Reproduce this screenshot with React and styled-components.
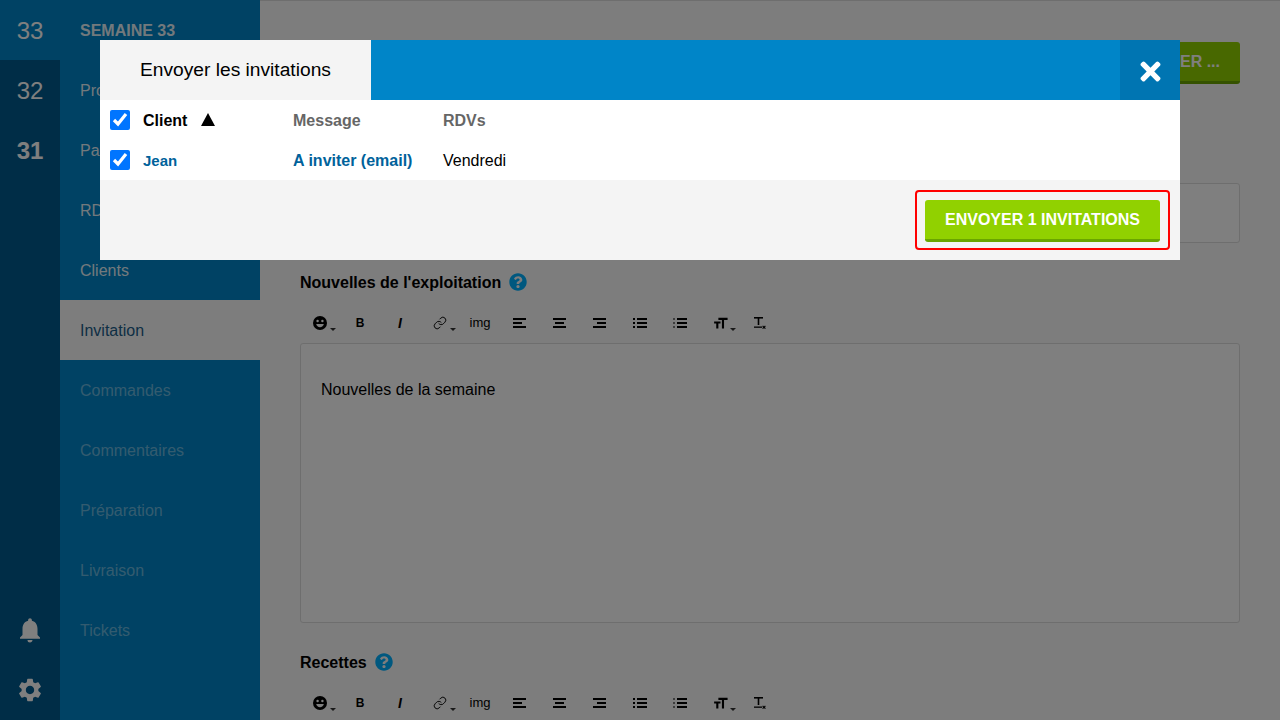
import React from 'react';
import styled, { createGlobalStyle } from 'styled-components';
import { MdNotifications, MdSettings, MdFormatSize } from 'react-icons/md';
import { FaQuestionCircle, FaTimes } from 'react-icons/fa';
import { Link } from 'lucide-react';

const GlobalStyle = createGlobalStyle`
    html, body {
        margin: 0;
        padding: 0;
        height: 100%;
        overflow: hidden;
    }
    body {
        font-family: "Liberation Sans", Arial, sans-serif;
        font-size: 16px;
        color: #000;
    }
`

const Page = styled.div`
    display: flex;
    width: 1280px;
    height: 720px;
    overflow: hidden;
    background-color: #fbfbfb;
`

const Rail = styled.div`
    display: flex;
    flex-direction: column;
    flex: 0 0 60px;
    background-color: #005a8e;
`

const RailItem = styled.div`
    display: flex;
    align-items: center;
    justify-content: center;
    box-sizing: border-box;
    height: 60px;
    padding-top: 1px;
    font-size: 24px;
    font-weight: ${p => (p.$strong ? 700 : 400)};
    color: #fff;
    background-color: ${p => (p.$current ? '#0085c8' : 'transparent')};
`

const RailIcon = styled(RailItem)`
    padding-top: 0;
    font-size: ${p => p.$size}px;
`

const RailSpacer = styled.div`
    flex: 1;
`

const Nav = styled.nav`
    display: flex;
    flex-direction: column;
    flex: 0 0 200px;
    background-color: #0085c8;
`

const NavItem = styled.div`
    display: flex;
    align-items: center;
    box-sizing: border-box;
    height: 60px;
    padding: 1px 0 0 20px;
    font-size: 16px;
    font-weight: ${p => (p.$title ? 700 : 400)};
    color: ${p => (p.$active ? '#1c5e8a' : p.$muted ? 'rgba(255,255,255,.42)' : 'rgba(255,255,255,.92)')};
    background-color: ${p => (p.$active ? '#fbfbfb' : 'transparent')};
`

const Main = styled.main`
    flex: 1;
    box-sizing: border-box;
    padding: 41px 40px 0;
    border-top: 1px solid #ddd;
    overflow: hidden;
`

const TopRow = styled.div`
    display: flex;
    justify-content: flex-end;
`

const SaveButton = styled.div`
    display: flex;
    align-items: center;
    box-sizing: border-box;
    height: 42px;
    padding: 0 20px;
    border-radius: 3px;
    border-bottom: 3px solid #6aa500;
    background-color: #91d100;
    color: #fff;
    font-weight: 700;
`

const InfoBox = styled.div`
    box-sizing: border-box;
    height: 60px;
    margin-top: 99px;
    border: 1px solid #ddd;
    border-radius: 3px;
    background-color: #fff;
`

const Section = styled.section`
    margin-top: ${p => p.$top}px;
`

const Heading = styled.h3`
    display: flex;
    align-items: center;
    gap: 8px;
    height: 20px;
    margin: 0;
    font-size: 16px;
    font-weight: 700;
    color: #000;
`

const HelpIcon = styled(FaQuestionCircle)`
    width: 18px;
    height: 18px;
    margin-bottom: 2px;
    color: #00b0ff;
`

const Toolbar = styled.div`
    display: flex;
    height: 40px;
    margin-top: 10px;
`

const Tool = styled.div`
    position: relative;
    display: flex;
    align-items: center;
    justify-content: center;
    width: 40px;
    height: 40px;
    font-size: 13px;
    color: #000;
`

const ToolText = styled.span`
    font-size: ${p => p.$size || 13}px;
    font-weight: ${p => (p.$bold ? 700 : 400)};
    font-style: ${p => (p.$italic ? 'italic' : 'normal')};
    margin-bottom: ${p => (p.$raised ? 2 : 0)}px;
`

const Caret = styled.span`
    position: absolute;
    left: 30px;
    top: 25px;
    width: 0;
    height: 0;
    border-left: 3px solid transparent;
    border-right: 3px solid transparent;
    border-top: 3px solid #333;
`

const Editor = styled.div`
    box-sizing: border-box;
    height: 280px;
    padding: 36px 20px;
    border: 1px solid #ddd;
    border-radius: 3px;
    background-color: #fff;
    line-height: 20px;
`

const Overlay = styled.div`
    position: fixed;
    inset: 0;
    background-color: rgba(0, 0, 0, .5);
`

const Modal = styled.div`
    position: fixed;
    top: 40px;
    left: 100px;
    width: 1080px;
    background-color: #fff;
`

const ModalHeader = styled.div`
    display: flex;
    height: 60px;
    background-color: #0085c8;
`

const ModalTitle = styled.div`
    display: flex;
    align-items: center;
    width: 271px;
    box-sizing: border-box;
    padding-left: 40px;
    font-size: 19.2px;
    background-color: #f4f4f4;
`

const CloseButton = styled.div`
    display: flex;
    align-items: center;
    justify-content: center;
    width: 60px;
    margin-left: auto;
    padding-top: 2px;
    box-sizing: border-box;
    background-color: #0075b2;
    color: #fff;
    font-size: 29px;
`

const Row = styled.div`
    display: grid;
    grid-template-columns: 33px 150px 150px 1fr;
    align-items: center;
    height: 40px;
    padding-left: 10px;
`

const Check = styled.input.attrs({ type: 'checkbox' })`
    width: 20px;
    height: 20px;
    margin: 0;
`

const Cell = styled.div`
    display: flex;
    align-items: center;
    padding-top: ${p => (p.$size ? 0 : 1)}px;
    font-size: ${p => p.$size || 16}px;
    font-weight: ${p => (p.$bold ? 700 : 400)};
    color: ${p => p.$color || '#000'};
`

const SortArrow = styled.span`
    width: 0;
    height: 0;
    margin-left: 14px;
    margin-bottom: 2px;
    border-left: 7px solid transparent;
    border-right: 7px solid transparent;
    border-bottom: 13px solid #000;
`

const ModalFooter = styled.div`
    display: flex;
    justify-content: flex-end;
    height: 80px;
    box-sizing: border-box;
    padding: 10px;
    background-color: #f4f4f4;
`

const Highlight = styled.div`
    box-sizing: border-box;
    height: 60px;
    padding: 8px;
    border: 2px solid #f00;
    border-radius: 4px;
`

const SendButton = styled(SaveButton)`
    width: 235px;
    justify-content: center;
    padding: 0;
`

function AlignIcon({ lines }) {
    return (
        <svg width="14" height="12" viewBox="0 0 14 12" fill="#000">
            {lines.map(([x, w], i) => <rect key={i} x={x} y={1 + i * 4} width={w} height="2" />)}
        </svg>
    )
}

function ListIcon({ faint }) {
    return (
        <svg width="14" height="12" viewBox="0 0 14 12" fill="#000">
            {[1, 5, 9].map(y => (
                <g key={y}>
                    <rect x="0" y={y} width="2" height="2" opacity={faint ? 0.5 : 1} />
                    <rect x="4" y={y} width="10" height="2" />
                </g>
            ))}
        </svg>
    )
}

function SmileIcon() {
    return (
        <svg width="14" height="14" viewBox="0 0 14 14">
            <circle cx="7" cy="7" r="7" fill="#000" />
            <circle cx="4.600" cy="5" r="1.200" fill="#fff" />
            <circle cx="9.400" cy="5" r="1.200" fill="#fff" />
            <path d="M3.200 8h7.600c-.3 2-1.900 3.200-3.800 3.200S3.500 10 3.200 8z" fill="#fff" />
        </svg>
    )
}

function ClearIcon() {
    return (
        <svg width="14" height="14" viewBox="0 0 14 14" fill="#000">
            <rect x="1" y="1" width="9" height="1.600" />
            <rect x="4.700" y="1" width="1.600" height="8" />
            <rect x="1" y="10.500" width="8" height="1.300" />
            <path d="M10 9.500l1 1 1-1 .8.8-1 1 1 1-.8.8-1-1-1 1-.8-.8 1-1-1-1z" />
        </svg>
    )
}

function EditorToolbar() {
    return (
        <Toolbar>
            <Tool><SmileIcon /><Caret /></Tool>
            <Tool><ToolText $bold $size={12}>B</ToolText></Tool>
            <Tool><ToolText $bold $italic $size={14}>I</ToolText></Tool>
            <Tool><Link size={14} strokeWidth={1.6} color="#000" /><Caret /></Tool>
            <Tool><ToolText $raised>img</ToolText></Tool>
            <Tool><AlignIcon lines={[[0, 13], [0, 9], [0, 13]]} /></Tool>
            <Tool><AlignIcon lines={[[0, 13], [2, 9], [0, 13]]} /></Tool>
            <Tool><AlignIcon lines={[[0, 13], [4, 9], [0, 13]]} /></Tool>
            <Tool><ListIcon /></Tool>
            <Tool><ListIcon faint /></Tool>
            <Tool><MdFormatSize size={17} /><Caret /></Tool>
            <Tool><ClearIcon /></Tool>
        </Toolbar>
    )
}

export default function App() {
    return (
        <Page>
            <GlobalStyle />
            <Rail>
                <RailItem $current>33</RailItem>
                <RailItem>32</RailItem>
                <RailItem $strong>31</RailItem>
                <RailSpacer />
                <RailIcon $size={30}><MdNotifications /></RailIcon>
                <RailIcon $size={28}><MdSettings /></RailIcon>
            </Rail>
            <Nav>
                <NavItem $title>SEMAINE 33</NavItem>
                <NavItem>Produits</NavItem>
                <NavItem>Paniers</NavItem>
                <NavItem>RDVs</NavItem>
                <NavItem>Clients</NavItem>
                <NavItem $active>Invitation</NavItem>
                <NavItem $muted>Commandes</NavItem>
                <NavItem $muted>Commentaires</NavItem>
                <NavItem $muted>Préparation</NavItem>
                <NavItem $muted>Livraison</NavItem>
                <NavItem $muted>Tickets</NavItem>
            </Nav>
            <Main>
                <TopRow><SaveButton>ENVOYER ...</SaveButton></TopRow>
                <InfoBox />
                <Section $top={30}>
                    <Heading>Nouvelles de l'exploitation <HelpIcon /></Heading>
                    <EditorToolbar />
                    <Editor>Nouvelles de la semaine</Editor>
                </Section>
                <Section $top={30}>
                    <Heading>Recettes <HelpIcon /></Heading>
                    <EditorToolbar />
                </Section>
            </Main>
            <Overlay />
            <Modal>
                <ModalHeader>
                    <ModalTitle>Envoyer les invitations</ModalTitle>
                    <CloseButton><FaTimes /></CloseButton>
                </ModalHeader>
                <Row>
                    <Check defaultChecked />
                    <Cell $bold>Client<SortArrow /></Cell>
                    <Cell $bold $color="#666">Message</Cell>
                    <Cell $bold $color="#666">RDVs</Cell>
                </Row>
                <Row>
                    <Check defaultChecked />
                    <Cell $bold $size={15} $color="#00629b">Jean</Cell>
                    <Cell $bold $color="#00629b">A inviter (email)</Cell>
                    <Cell>Vendredi</Cell>
                </Row>
                <ModalFooter>
                    <Highlight><SendButton>ENVOYER 1 INVITATIONS</SendButton></Highlight>
                </ModalFooter>
            </Modal>
        </Page>
    )
}
